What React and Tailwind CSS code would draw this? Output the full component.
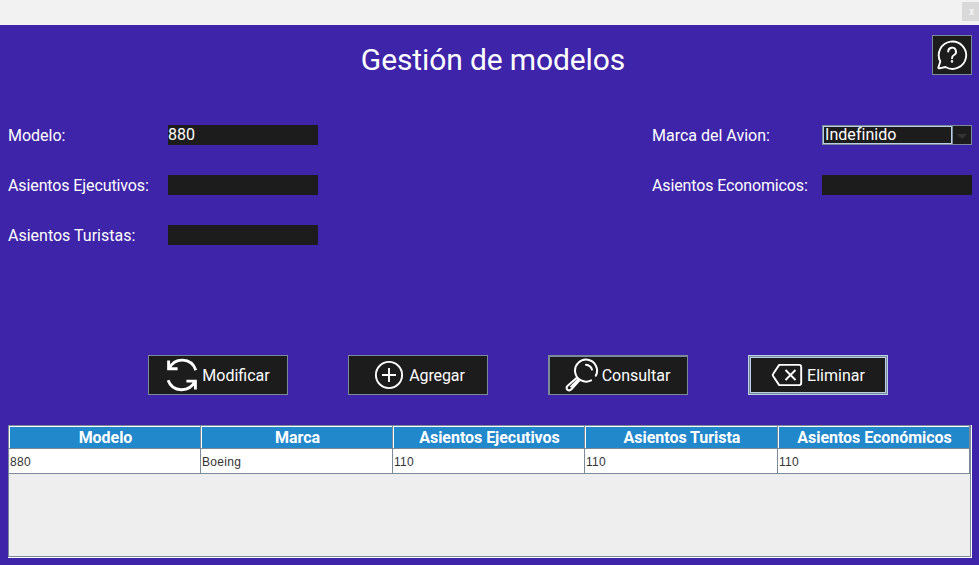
import React from "react";

const columns = [
  { title: "Modelo", value: "880" },
  { title: "Marca", value: "Boeing" },
  { title: "Asientos Ejecutivos", value: "110" },
  { title: "Asientos Turista", value: "110" },
  { title: "Asientos Económicos", value: "110" },
];

function Field({ label, value, labelWidth, tracking = "" }) {
  return (
    <div className="flex h-5 items-start">
      <label className={`${labelWidth} ${tracking} whitespace-nowrap leading-[22px]`}>{label}</label>
      <div className="h-5 w-[150px] bg-[#1c1c1c] leading-[19px]">{value}</div>
    </div>
  );
}

function HelpIcon() {
  return (
    <svg width="32" height="32" viewBox="0 0 32 32" fill="none" stroke="#fff" strokeWidth="1.9" strokeLinecap="round" strokeLinejoin="round">
      <path d="M4.3 22.5A13.7 13.7 0 1 1 9.5 28L3.2 29.4Q2.2 29.5 2.4 28.5Z" />
      <path d="M12.2 12.6a3.9 3.9 0 1 1 5.8 3.4c-1.4.8-2 1.4-2 3.2" />
      <path d="M16 22.2v.4" strokeWidth="2.4" />
    </svg>
  );
}

function RefreshIcon() {
  return (
    <svg width="32" height="34" viewBox="0 0 32 34" fill="none" stroke="#fff" strokeWidth="2.9">
      <path d="M3 10.8C8.5-.8 25.2-1.1 29.8 12.2" />
      <path d="M2.6 2.4v8.3h9" />
      <path d="M2.1 22.3C6.5 34.6 23.5 34.8 29 23.2" />
      <path d="M29.4 31.4v-8.3h-9" />
    </svg>
  );
}

function PlusIcon() {
  return (
    <svg width="32" height="32" viewBox="0 0 32 32" fill="none" stroke="#fff" strokeWidth="1.9">
      <circle cx="16" cy="16" r="13.1" />
      <path d="M16 9v14M9 16h14" />
    </svg>
  );
}

function SearchIcon() {
  return (
    <svg width="34" height="34" viewBox="0 0 34 34" fill="none" stroke="#fff" strokeWidth="2" strokeLinecap="round" strokeLinejoin="round">
      <path d="M26.1 22.4A11 11 0 1 1 30.8 17.7" />
      <path d="M21 6.8q4.7.5 6 4.8" />
      <path d="M11.5 20.1 2.4 27.9q-1.6 2.2 0 3.8 2 1.6 4-.4l8.1-9M13.2 21.5l-7.1 7.1" />
    </svg>
  );
}

function DeleteIcon() {
  return (
    <svg width="32" height="24" viewBox="0 0 32 24" fill="none" stroke="#fff" strokeWidth="1.9" strokeLinejoin="round">
      <path d="M8.2 1.9h20q2 0 2 2v16.2q0 2-2 2h-20L2.1 13q-.8-1 0-2Z" />
      <path d="m14.5 7 10 10M24.5 7l-10 10" />
    </svg>
  );
}

function ActionButton({ frame, children }) {
  return (
    <button className={`flex h-10 w-[140px] items-center justify-center bg-[#1c1c1c] ${frame}`}>
      {children}
    </button>
  );
}

export default function App() {
  return (
    <div className="flex h-[565px] w-[979px] flex-col overflow-hidden bg-[#3e24a9] font-['Roboto',sans-serif] text-base text-white">
      <div className="flex h-[25px] shrink-0 justify-end bg-[#f2f2f2] pt-0.5">
        <button className="flex h-[19px] w-[17px] items-center justify-center bg-[#d9d9d9] pl-0.5 text-[10px] font-bold leading-none text-[#f4f4f4]">x</button>
      </div>

      <header className="flex h-[100px] shrink-0 items-start pl-[54px] pr-[7px] pt-2.5">
        <h1 className="flex-1 text-center text-[30px] leading-[50px] tracking-[-0.12px]">Gestión de modelos</h1>
        <button className="flex h-10 w-10 items-center justify-center border border-[#7a8a99] bg-[#1c1c1c]">
          <HelpIcon />
        </button>
      </header>

      <main className="flex h-[230px] shrink-0 justify-between pl-2 pr-[7px]">
        <div className="flex flex-col gap-[30px]">
          <Field label="Modelo:" value="880" labelWidth="w-40" />
          <Field label="Asientos Ejecutivos:" labelWidth="w-40" tracking="tracking-[-0.11px]" />
          <Field label="Asientos Turistas:" labelWidth="w-40" />
        </div>
        <div className="flex flex-col gap-[30px]">
          <div className="flex h-5 items-start">
            <label className="w-[170px] leading-[22px]">Marca del Avion:</label>
            <div className="flex h-5 w-[150px] border border-[#7a8a99] bg-[#1c1c1c]">
              <div className="h-[18px] w-[129px] border border-[#b8cfe5] pl-px leading-[15px] tracking-[0.05px]">Indefinido</div>
              <div className="flex flex-1 items-center justify-center border-l border-[#7a8a99] pt-0.5">
                <svg width="10" height="5" viewBox="0 0 10 5">
                  <path d="M0 0h10L5 5Z" fill="#333" />
                </svg>
              </div>
            </div>
          </div>
          <Field label="Asientos Economicos:" labelWidth="w-[170px]" tracking="tracking-[-0.13px]" />
        </div>
      </main>

      <div className="flex h-[70px] shrink-0 gap-[60px] pl-[148px]">
        <ActionButton frame="gap-1 border border-[#7a8a99]">
          <RefreshIcon />
          <span className="pt-px">Modificar</span>
        </ActionButton>
        <ActionButton frame="gap-1 border border-[#7a8a99] pl-0.5">
          <PlusIcon />
          <span className="pt-px tracking-[-0.1px]">Agregar</span>
        </ActionButton>
        <ActionButton frame="gap-[3px] border border-l-2 border-t-2 border-[#7a8a99] pb-px pr-0.5">
          <SearchIcon />
          <span className="pt-px">Consultar</span>
        </ActionButton>
        <ActionButton frame="gap-1 border border-[#b8cfe5] shadow-[inset_0_0_0_1px_#7a8a99,inset_0_0_0_2px_#b8cfe5]">
          <DeleteIcon />
          <span className="pt-px">Eliminar</span>
        </ActionButton>
      </div>

      <div className="ml-2 h-[133px] w-[964px] shrink-0 border-b border-r border-white">
        <div className="flex h-[132px] w-[963px] flex-col border border-[#7a8a99] bg-[#eeeeee]">
          <div className="grid h-[23px] shrink-0 grid-cols-[192px_192px_192px_193px_192px]">
            {columns.map((column) => (
              <div key={column.title} className="h-[23px] border-b border-r border-[#7a8a99]">
                <div className="h-[22px] border-l border-t border-white bg-[#2288cc] pl-px text-center font-bold leading-[21px] tracking-[-0.04px]">
                  {column.title}
                </div>
              </div>
            ))}
          </div>
          <div className="grid h-[25px] shrink-0 grid-cols-[192px_192px_192px_193px_192px]">
            {columns.map((column) => (
              <div key={column.title} className="h-[25px] border-b border-r border-[#7a8a99] bg-white pl-px font-['Liberation_Sans',Arial,sans-serif] text-xs leading-[26px] tracking-[0.33px] text-[#333333]">
                {column.value}
              </div>
            ))}
          </div>
        </div>
      </div>
    </div>
  );
}
